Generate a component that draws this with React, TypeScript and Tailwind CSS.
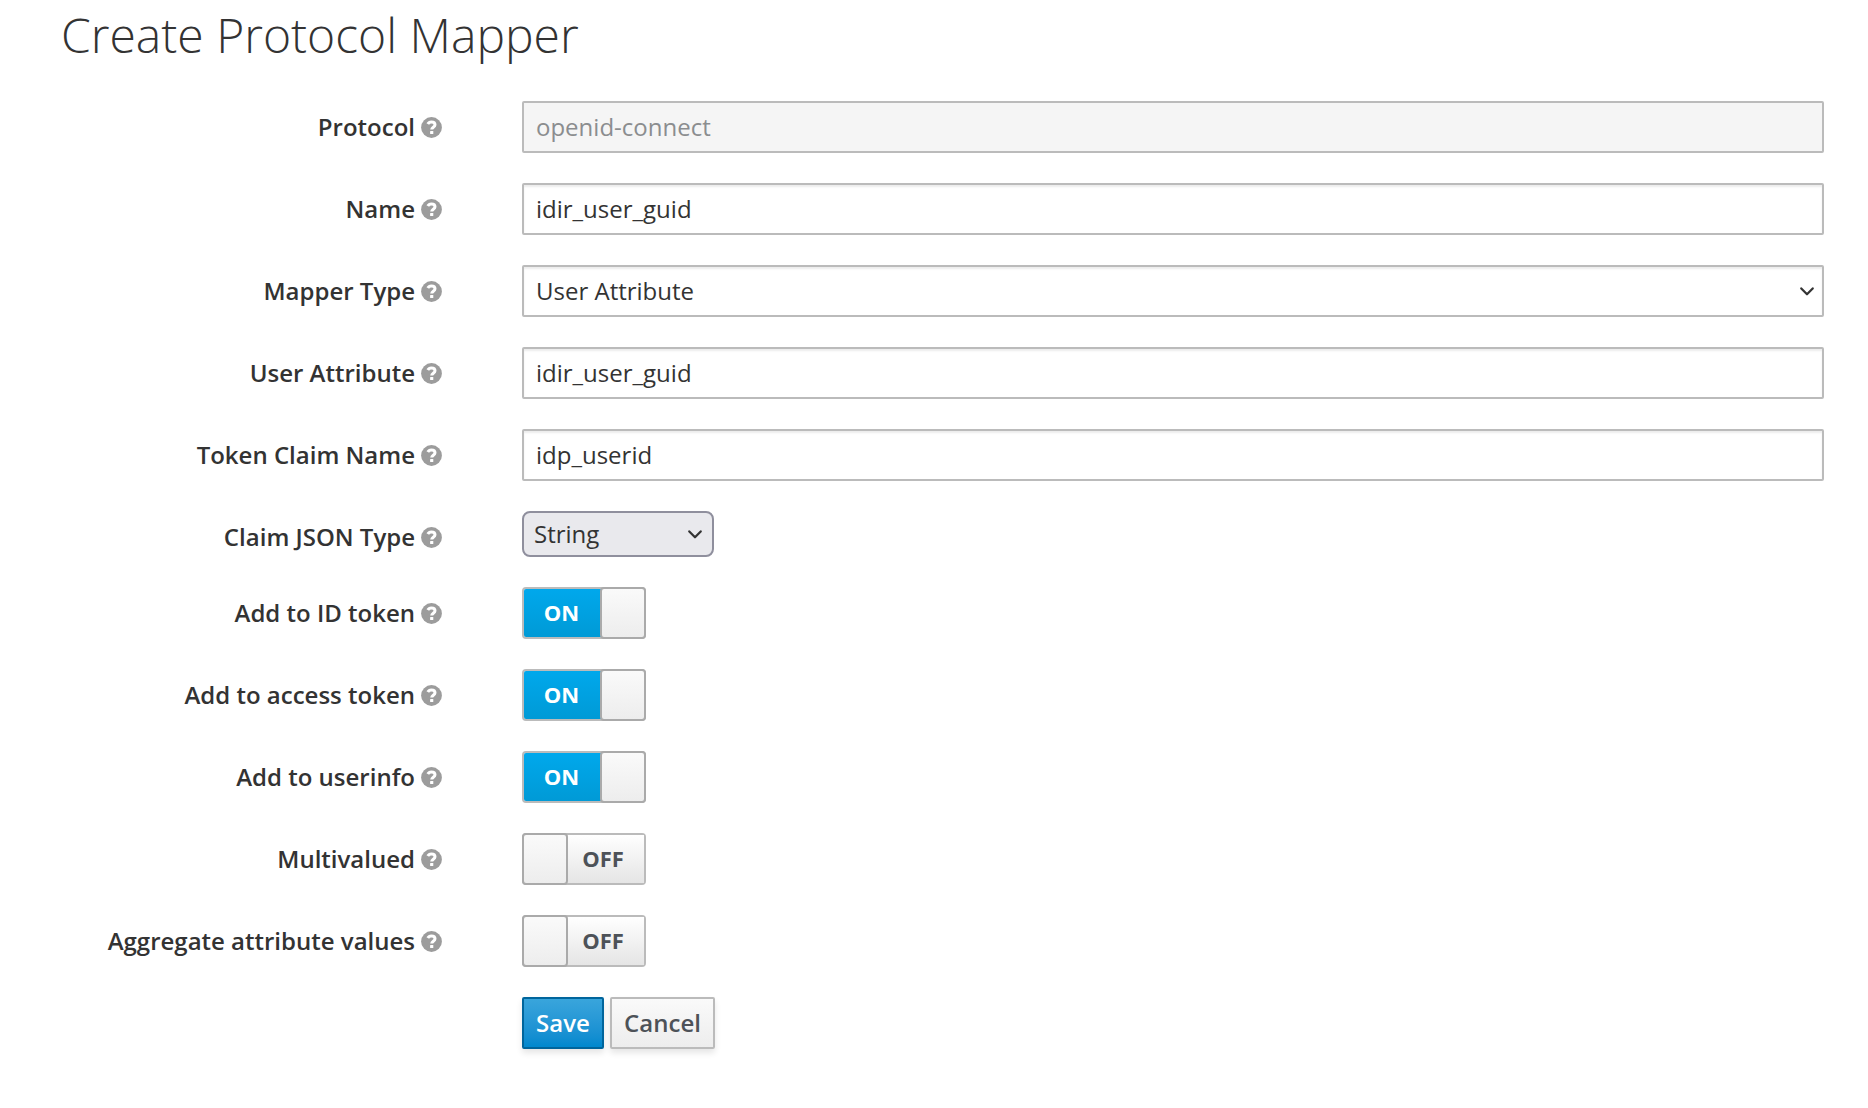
import { useState, type ReactNode } from "react";

function HelpIcon() {
  return (
    <svg viewBox="0 0 21 21" className="size-[21px] shrink-0">
      <circle cx="10.5" cy="10.5" r="10.4" fill="#9c9c9c" />
      <path d="M6.8 7C7.5 5.6 8.8 4.9 10.4 4.9c2.2 0 3.6 1.2 3.6 2.9 0 2.4-3.3 2.5-3.3 4.8" fill="none" stroke="#fff" strokeWidth="3" />
      <rect x="9.1" y="13.9" width="3.2" height="3.2" rx="0.5" fill="#fff" />
    </svg>
  );
}

function Row({ label, children, short }: { label: string; children: ReactNode; short?: boolean }) {
  return (
    <div className={short ? "flex h-[46px] items-start" : "flex h-[52px] items-start"}>
      <div className="mr-20 flex h-[52px] w-[442px] shrink-0 items-center justify-end gap-1.5 font-semibold leading-10">
        <span className="whitespace-nowrap">{label}</span>
        <HelpIcon />
      </div>
      {children}
    </div>
  );
}

const field = "h-[52px] w-full rounded-[2px] border-2 border-[#bbb] px-3 outline-none";

function TextField({ initial, disabled }: { initial: string; disabled?: boolean }) {
  const [value, setValue] = useState(initial);
  return (
    <input
      className={
        disabled
          ? `${field} bg-[#f5f5f5] pb-[2px] text-[#8b8d8f]`
          : `${field} bg-white pb-[2px] text-[#333] shadow-[inset_0_2px_2px_rgba(3,3,3,0.075)]`
      }
      value={value}
      disabled={disabled}
      onChange={(e) => setValue(e.target.value)}
    />
  );
}

function Chevron({ className }: { className: string }) {
  return (
    <svg viewBox="0 0 14 9" className={className} fill="none" stroke="#333" strokeWidth="2.2" strokeLinecap="round" strokeLinejoin="round">
      <path d="M1.3 1.4 7 7.3 12.7 1.4" />
    </svg>
  );
}

function Toggle({ initial }: { initial: boolean }) {
  const [on, setOn] = useState(initial);
  const knob = (
    <span className="-my-[2px] h-[52px] w-[46px] shrink-0 rounded-[4px] border-2 border-[#aaa] bg-linear-to-b from-[#fafafa] to-[#ededed]" />
  );
  return (
    <button
      type="button"
      onClick={() => setOn(!on)}
      className="flex h-[52px] w-[124px] items-stretch rounded-[4px] border-2 border-[#bbb] text-[22px] font-bold"
    >
      {on ? (
        <>
          <span className="flex h-12 w-[78px] items-center justify-center rounded-l-[2px] bg-linear-to-b from-[#00a8ec] to-[#009ad6] pr-[3px] pb-[2px] text-white">ON</span>
          <span className="-mr-[2px] -ml-[2px] flex">{knob}</span>
        </>
      ) : (
        <>
          <span className="-ml-[2px] flex">{knob}</span>
          <span className="flex h-12 flex-1 items-center justify-center bg-linear-to-b from-white to-[#e5e5e5] pr-1.5 pb-[2px] text-[#4d5258]">OFF</span>
        </>
      )}
    </button>
  );
}

export default function App() {
  return (
    <main className="h-[1108px] w-[1868px] overflow-hidden bg-white font-['Open_Sans',sans-serif] text-[24px] text-[#333]">
      <h1 className="ml-[61px] h-[101px] text-[48px] font-light leading-[70px]">Create Protocol Mapper</h1>
      <form className="flex flex-col gap-[30px] pr-11" onSubmit={(e) => e.preventDefault()}>
        <Row label="Protocol"><TextField initial="openid-connect" disabled /></Row>
        <Row label="Name"><TextField initial="idir_user_guid" /></Row>
        <Row label="Mapper Type">
          <div className="relative w-full">
            <select className={`${field} appearance-none bg-white text-[#333] shadow-[inset_0_2px_2px_rgba(3,3,3,0.075)]`}>
              <option>User Attribute</option>
            </select>
            <Chevron className="pointer-events-none absolute top-[22px] right-[10px] h-[9px] w-[14px]" />
          </div>
        </Row>
        <Row label="User Attribute"><TextField initial="idir_user_guid" /></Row>
        <Row label="Token Claim Name"><TextField initial="idp_userid" /></Row>
        <Row label="Claim JSON Type" short>
          <div className="relative w-48">
            <select className="h-[46px] w-full appearance-none rounded-lg border-2 border-[#8f8f9d] bg-[#e9e9ed] px-[10px] text-[#333]">
              <option>String</option>
            </select>
            <Chevron className="pointer-events-none absolute top-[19px] right-[12px] h-[9px] w-[14px]" />
          </div>
        </Row>
        <Row label="Add to ID token"><Toggle initial /></Row>
        <Row label="Add to access token"><Toggle initial /></Row>
        <Row label="Add to userinfo"><Toggle initial /></Row>
        <Row label="Multivalued"><Toggle initial={false} /></Row>
        <Row label="Aggregate attribute values"><Toggle initial={false} /></Row>
        <div className="ml-[522px] flex gap-[6px] font-semibold">
          <button type="submit" className="h-[52px] w-[82px] rounded-[2px] border-2 border-[#00659c] bg-linear-to-b from-[#39a5dc] to-[#0088ce] text-white shadow-[0_4px_6px_rgba(3,3,3,0.1)]">Save</button>
          <button type="button" className="h-[52px] w-[105px] rounded-[2px] border-2 border-[#bbb] bg-linear-to-b from-[#fafafa] to-[#ededed] text-[#4d5258] shadow-[0_4px_6px_rgba(3,3,3,0.1)]">Cancel</button>
        </div>
      </form>
    </main>
  );
}
